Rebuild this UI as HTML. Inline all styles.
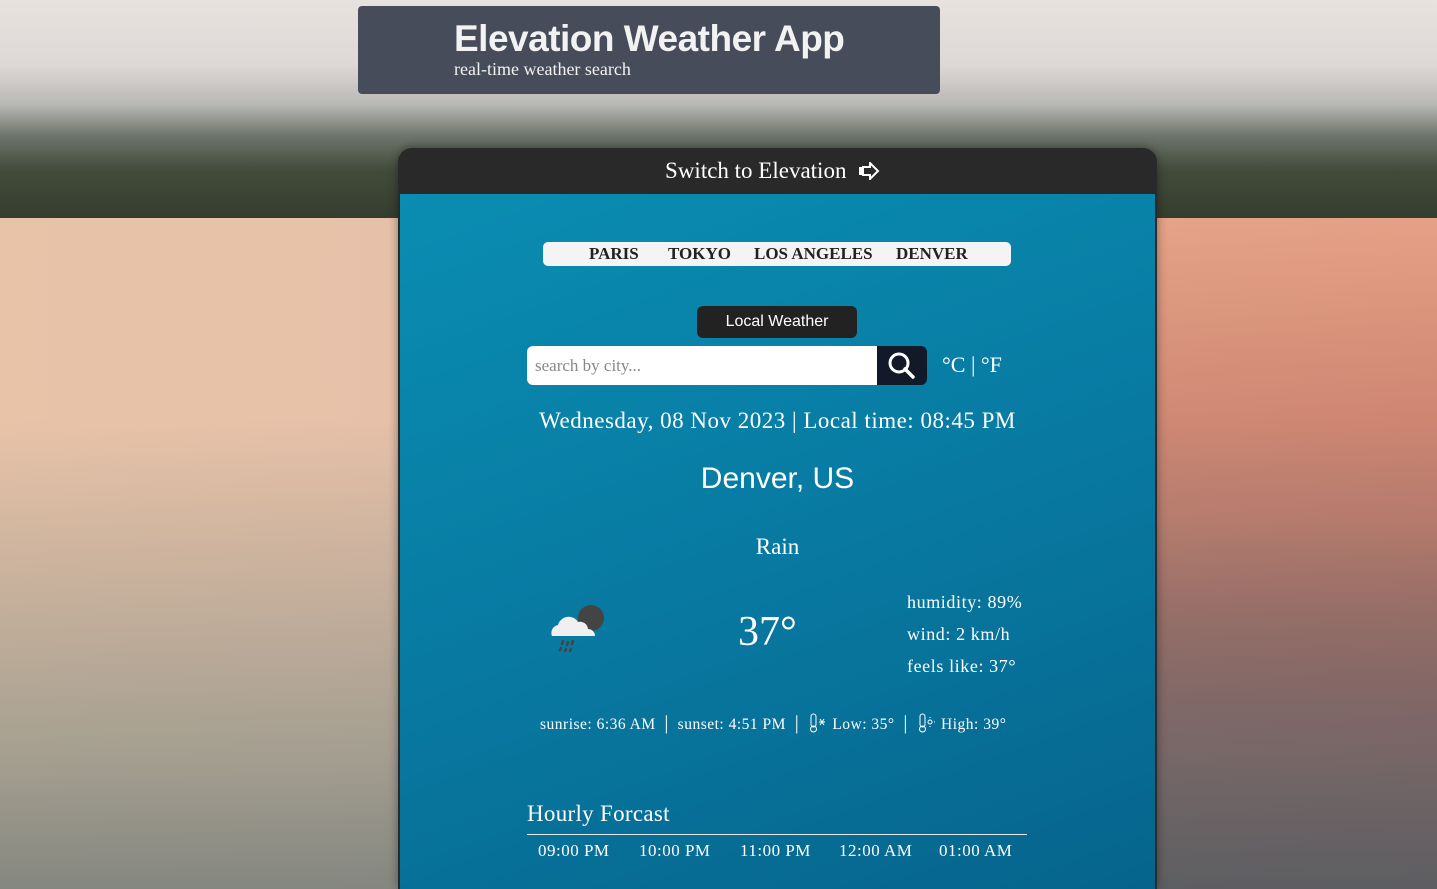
<!DOCTYPE html>
<html><head><style>
*{margin:0;padding:0;box-sizing:border-box}
body{width:1437px;height:889px;overflow:hidden;position:relative;font-family:"Liberation Serif",serif;
background:linear-gradient(90deg,#e9c3a8 0%,#e6c0a8 30%,#d8a890 70%,#c88070 100%);}
.bg2{position:absolute;left:0;top:218px;width:1437px;height:671px;background:linear-gradient(180deg,rgba(0,0,0,0) 30%,rgba(110,130,125,.55) 80%,rgba(90,110,110,.7) 100%);}
.bg3{position:absolute;right:0;top:218px;width:300px;height:671px;background:linear-gradient(180deg,#e8a488 0%,#c27868 45%,#7a3e48 80%,#5a3040 100%);opacity:.9}
.sky{position:absolute;left:0;top:0;width:1437px;height:218px;background:linear-gradient(180deg,#e8e2df 0%,#ddd8d6 30%,#b8b8b4 48%,#6f766c 62%,#434b3b 78%,#353d2e 100%);}
.hdr{position:absolute;left:358px;top:6px;width:582px;height:88px;background:#464c59;border-radius:4px;color:#f2f2f2}
.hdr h1{position:absolute;left:96px;top:12px;font:bold 37px "Liberation Sans",sans-serif;letter-spacing:-0.5px}
.hdr p{position:absolute;left:96px;top:53px;font-size:18px}
.card{position:absolute;left:398px;top:148px;width:759px;height:741px;border-radius:14px 14px 0 0;background:#292929;box-shadow:0 0 10px rgba(0,0,0,.4)}
.ch{height:46px;color:#fff;text-align:center;font-size:23px;line-height:46px}
.cb{position:absolute;left:2px;top:46px;width:755px;height:695px;background:linear-gradient(160deg,#0a8db2 0%,#087aa2 50%,#06648c 100%);color:#fff}
.cities{position:absolute;left:143px;top:48px;width:468px;height:24px;background:#f4f4f4;border-radius:5px;color:#222;font-size:17px;line-height:24px;font-weight:bold}
.cities span{position:absolute;top:0}
.lw{position:absolute;left:297px;top:112px;width:160px;height:32px;background:#222;border-radius:6px;color:#fff;font:16px "Liberation Sans",sans-serif;text-align:center;line-height:32px}
.inp{position:absolute;left:127px;top:152px;width:350px;height:39px;background:#fff;border-radius:6px 0 0 6px;color:#888;font-size:17px;line-height:39px;padding-left:8px}
.sb{position:absolute;left:477px;top:152px;width:50px;height:39px;background:#121a2a;border-radius:0 6px 6px 0}
.t{position:absolute;white-space:nowrap}
</style></head><body>
<div class="sky"></div><div class="bg3"></div><div class="bg2"></div>
<div class="hdr"><h1>Elevation Weather App</h1><p>real-time weather search</p></div>
<div class="card">
<div class="ch" style="padding-right:10px">Switch to Elevation &nbsp;<svg width="22" height="18" viewBox="0 0 22 18" style="vertical-align:-2px"><path d="M2 6h2v6H2zM5 5h7V1l8 8-8 8v-4H5z" fill="none" stroke="#fff" stroke-width="2"/></svg></div>
<div class="cb">
<div class="cities"><span style="left:46px">PARIS</span><span style="left:125px">TOKYO</span><span style="left:211px">LOS ANGELES</span><span style="left:353px">DENVER</span></div>
<div class="lw">Local Weather</div>
<div class="inp">search by city...</div>
<div class="sb"><svg width="50" height="39"><circle cx="22" cy="17" r="9" fill="none" stroke="#fff" stroke-width="3"/><path d="M28 23l8 8" stroke="#fff" stroke-width="3.5" stroke-linecap="round"/></svg></div>
<div class="t" style="left:542px;top:158px;font-size:22px">°C | °F</div>
<div class="t" style="left:0;width:755px;text-align:center;top:214px;font-size:23px;letter-spacing:0.5px">Wednesday, 08 Nov 2023 | Local time: 08:45 PM</div>
<div class="t" style="left:0;width:755px;text-align:center;top:268px;font:30px 'Liberation Sans',sans-serif">Denver, US</div>
<div class="t" style="left:0;width:755px;text-align:center;top:340px;font-size:23px">Rain</div>
<svg class="t" style="left:148px;top:410px" width="60" height="56"><circle cx="43" cy="14" r="13" fill="#444"/><path d="M4 32a8 8 0 0 1 6-11a11 11 0 0 1 20-3a8 8 0 0 1 10 7a7 7 0 0 1 7 7z" fill="#f0f0f0"/><g stroke="#444" stroke-width="2.5" stroke-linecap="round"><path d="M15 37l-1 3M20 38l-1 3M25 37l-1 3M13 44l-1 2M18 45l-1 2M23 45l-1 2"/></g></svg>
<div class="t" style="left:338px;top:414px;font-size:42px">37°</div>
<div class="t" style="left:507px;top:392px;font-size:18px;line-height:32px;letter-spacing:0.6px">humidity: 89%<br>wind: 2 km/h<br>feels like: 37°</div>
<div class="t" style="left:140px;top:518px;font-size:15.5px;letter-spacing:0.5px">sunrise: 6:36 AM &nbsp;<span style="font-size:20px">|</span>&nbsp; sunset: 4:51 PM &nbsp;<span style="font-size:20px">|</span>&nbsp; <svg width="20" height="20" style="vertical-align:-4px"><rect x="3" y="1" width="5" height="13" rx="2.5" fill="none" stroke="#fff"/><circle cx="5.5" cy="16" r="3" fill="none" stroke="#fff"/><path d="M12 6l4 6M16 6l-4 6M11 9h6" stroke="#fff"/></svg> Low: 35° &nbsp;<span style="font-size:20px">|</span>&nbsp; <svg width="20" height="20" style="vertical-align:-4px"><rect x="3" y="1" width="5" height="13" rx="2.5" fill="none" stroke="#fff"/><circle cx="5.5" cy="16" r="3" fill="none" stroke="#fff"/><circle cx="13" cy="9" r="2" fill="none" stroke="#fff"/><path d="M13 4v1M13 13v1M17 9h1" stroke="#fff"/></svg> High: 39°</div>
<div class="t" style="left:127px;top:607px;font-size:23px;letter-spacing:0.3px">Hourly Forcast</div>
<div class="t" style="left:127px;top:640px;width:500px;height:1px;background:#e8e8e8"></div>
<div class="t" style="left:138px;top:647px;font-size:17px;letter-spacing:0.5px">09:00 PM</div>
<div class="t" style="left:239px;top:647px;font-size:17px;letter-spacing:0.5px">10:00 PM</div>
<div class="t" style="left:340px;top:647px;font-size:17px;letter-spacing:0.5px">11:00 PM</div>
<div class="t" style="left:439px;top:647px;font-size:17px;letter-spacing:0.5px">12:00 AM</div>
<div class="t" style="left:539px;top:647px;font-size:17px;letter-spacing:0.5px">01:00 AM</div>
</div></div>
</body></html>
